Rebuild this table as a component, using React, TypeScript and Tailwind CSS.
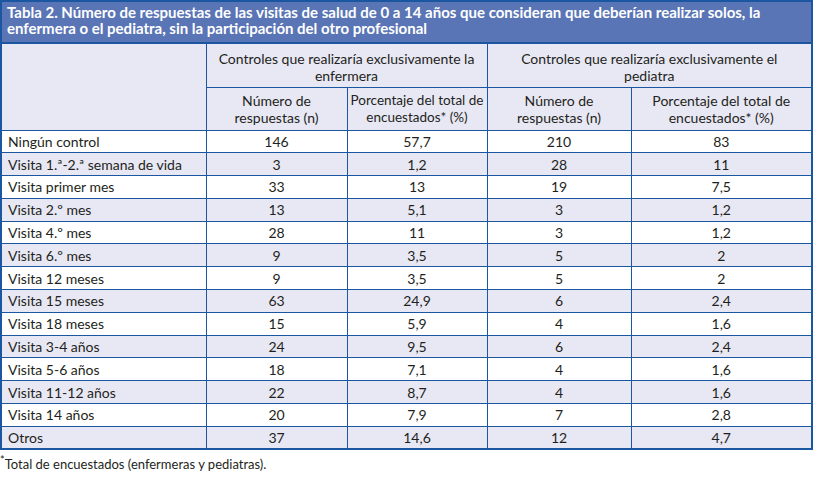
const rows = [
  ["Ningún control", "146", "57,7", "210", "83"],
  ["Visita 1.ª-2.ª semana de vida", "3", "1,2", "28", "11"],
  ["Visita primer mes", "33", "13", "19", "7,5"],
  ["Visita 2.º mes", "13", "5,1", "3", "1,2"],
  ["Visita 4.º mes", "28", "11", "3", "1,2"],
  ["Visita 6.º mes", "9", "3,5", "5", "2"],
  ["Visita 12 meses", "9", "3,5", "5", "2"],
  ["Visita 15 meses", "63", "24,9", "6", "2,4"],
  ["Visita 18 meses", "15", "5,9", "4", "1,6"],
  ["Visita 3-4 años", "24", "9,5", "6", "2,4"],
  ["Visita 5-6 años", "18", "7,1", "4", "1,6"],
  ["Visita 11-12 años", "22", "8,7", "4", "1,6"],
  ["Visita 14 años", "20", "7,9", "7", "2,8"],
  ["Otros", "37", "14,6", "12", "4,7"],
];

const cell = "border border-[#1b57a0] px-0 text-center font-normal";

export default function App() {
  return (
    <div className="w-[813px] h-[477px] bg-white text-[#231f20] font-['Lato',sans-serif]">
      <div className="border-2 border-[#1b57a0] border-b-0 bg-[#5a75b5] px-[5px] pt-[2px] h-[42px] text-white font-bold text-[15px] leading-[16px]">
        Tabla 2. Número de respuestas de las visitas de salud de 0 a 14 años que consideran que deberían realizar solos, la
        enfermera o el pediatra, sin la participación del otro profesional
      </div>
      <table className="w-[813px] table-fixed border-collapse border-2 border-[#1b57a0] text-[14px]">
        <colgroup>
          <col className="w-[205px]" />
          <col className="w-[141px]" />
          <col className="w-[140px]" />
          <col className="w-[144px]" />
          <col />
        </colgroup>
        <thead className="bg-[#e8e8f4] leading-[17px]">
          <tr className="h-[44px]">
            <th rowSpan={2} className={cell}></th>
            <th colSpan={2} className={`${cell} px-2 pt-[3px]`}>
              Controles que realizaría exclusivamente la enfermera
            </th>
            <th colSpan={2} className={`${cell} px-6 pt-[3px]`}>
              Controles que realizaría exclusivamente el pediatra
            </th>
          </tr>
          <tr className="h-[43px]">
            <th className={`${cell} px-4`}>Número de respuestas (n)</th>
            <th className={`${cell} text-[13.5px]`}>Porcentaje del total de encuestados* (%)</th>
            <th className={`${cell} px-4`}>Número de respuestas (n)</th>
            <th className={`${cell} px-4`}>Porcentaje del total de encuestados* (%)</th>
          </tr>
        </thead>
        <tbody>
          {rows.map((r, i) => (
            <tr key={i} className={`h-[22.8px] ${i % 2 === 1 ? "bg-[#e8e8f4]" : "bg-white"}`}>
              <td className="border border-[#1b57a0] pl-[6px] leading-[21px]">{r[0]}</td>
              {r.slice(1).map((v, j) => (
                <td key={j} className="border border-[#1b57a0] text-center leading-[21px]">
                  {v}
                </td>
              ))}
            </tr>
          ))}
        </tbody>
      </table>
      <p className="mt-[7px] text-[13px] leading-[15px]">
        <sup className="text-[11px]">*</sup>Total de encuestados (enfermeras y pediatras).
      </p>
    </div>
  );
}
